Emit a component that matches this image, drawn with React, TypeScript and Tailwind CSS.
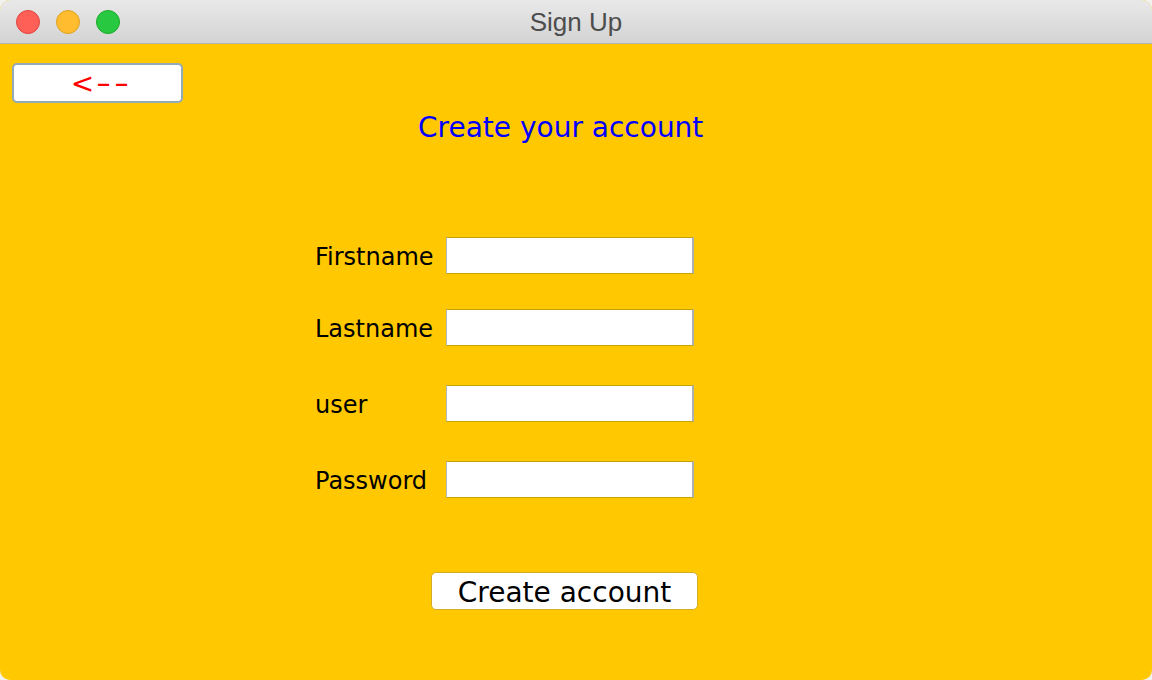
import React from "react";

const labelFont = { fontFamily: '"DejaVu Sans", "Liberation Sans", sans-serif' };

function Row({ label, mt }: { label: string; mt: string }) {
  return (
    <div className={`flex items-center ${mt}`}>
      <div className="w-[131px] text-[24px] leading-[28px] pt-[3px] text-black" style={labelFont}>
        {label}
      </div>
      <div className="h-[37px] w-[248px] bg-white border-y border-y-[#c9a300] border-l border-l-[#b8b8b8] border-r-2 border-r-[#b0b0b0]" />
    </div>
  );
}

export default function App() {
  return (
    <div className="w-[1152px] h-[680px] bg-[#f2f2f2]">
      <div className="w-[1152px] h-[680px] rounded-[10px] overflow-hidden flex flex-col bg-[#ffc800]">
        <div className="relative h-[44px] shrink-0 bg-gradient-to-b from-[#e9e9e9] to-[#d3d3d3] border-b border-[#b3b3b3] flex items-center justify-center">
          <div className="absolute left-[16px] top-[10px] flex gap-[16px]">
            <div className="w-[24px] h-[24px] rounded-full bg-[#fe5f57] border border-[#e0443e]" />
            <div className="w-[24px] h-[24px] rounded-full bg-[#febc2e] border border-[#dea123]" />
            <div className="w-[24px] h-[24px] rounded-full bg-[#28c840] border border-[#1aab29]" />
          </div>
          <span
            className="text-[26px] text-[#4d4d4d] leading-none"
            style={{ fontFamily: '"Liberation Sans", Arial, sans-serif' }}
          >
            Sign Up
          </span>
        </div>
        <div className="flex-1 flex flex-col">
          <button
            className="mt-[19px] ml-[12px] w-[171px] h-[40px] bg-white rounded-[5px] border-2 border-[#93aabb] flex items-center justify-center leading-none text-[#ff0000]"
            style={labelFont}
          >
            <span className="flex items-center ml-[2px] pt-[2px]">
              <span className="text-[28px]">&lt;</span>
              <span className="inline-block text-[28px] tracking-[2px] scale-x-150 ml-[8px]">--</span>
            </span>
          </button>
          <div
            className="ml-[418px] mt-[9px] text-[28px] leading-[32px] text-[#0000ff]"
            style={labelFont}
          >
            Create your account
          </div>
          <div className="ml-[315px] flex flex-col">
            <Row label="Firstname" mt="mt-[93px]" />
            <Row label="Lastname" mt="mt-[35px]" />
            <Row label="user" mt="mt-[39px]" />
            <Row label="Password" mt="mt-[39px]" />
          </div>
          <button
            className="mt-[74px] ml-[431px] w-[267px] h-[38px] bg-white rounded-[5px] border border-[#d2ad2a] flex items-center justify-center text-[28px] leading-none text-black"
            style={labelFont}
          >
            <span className="pt-[3px]">Create account</span>
          </button>
        </div>
      </div>
    </div>
  );
}
